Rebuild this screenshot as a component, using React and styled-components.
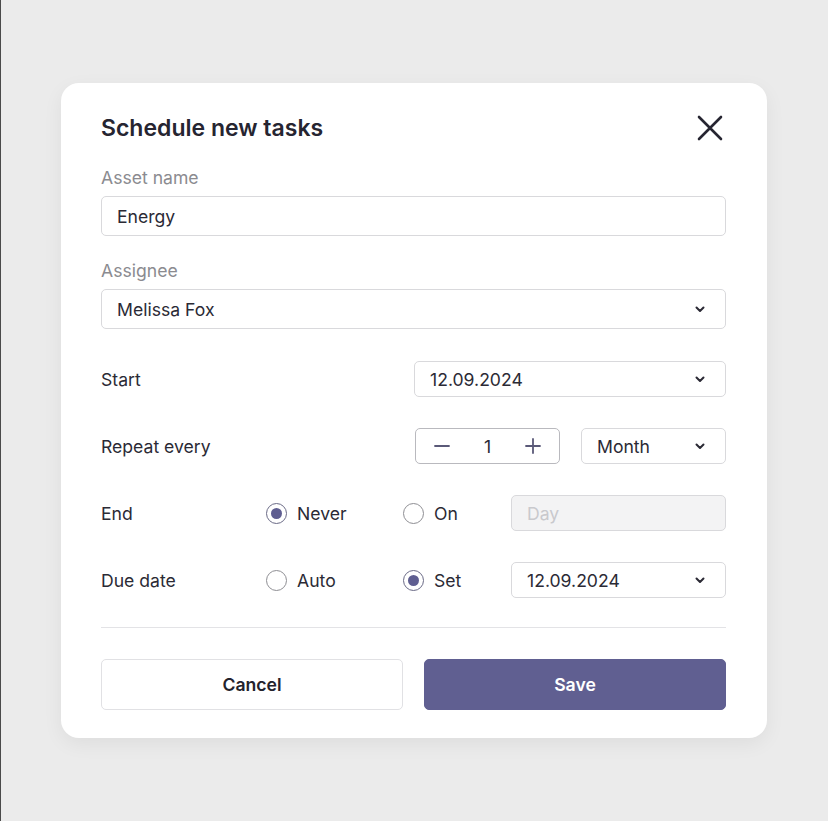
import React from "react";
import styled, { createGlobalStyle } from "styled-components";

const Global = createGlobalStyle`
  html, body { margin: 0; padding: 0; background: #ebebeb; }
  body {
    font-family: Inter, "Noto Sans", sans-serif;
    color: #2b2a35;
    min-height: 821px;
    border-left: 1px solid #4a4a4a;
    box-sizing: border-box;
  }
  * { box-sizing: border-box; }
`;

const Page = styled.div`
  padding: 83px 0 0 60px;
`;

const Card = styled.div`
  width: 706px;
  background: #fff;
  border-radius: 18px;
  box-shadow: 0 6px 20px rgba(0, 0, 0, 0.06);
  padding: 31px 41px 28px 40px;
  display: flex;
  flex-direction: column;
`;

const Header = styled.div`
  display: flex;
  align-items: center;
  justify-content: space-between;
  height: 28px;
  margin-bottom: 25px;
`;

const Title = styled.h1`
  margin: 0;
  font-size: 23px;
  font-weight: 600;
  color: #262531;
`;

const CloseBtn = styled.button`
  border: none;
  background: none;
  padding: 0;
  width: 26px;
  height: 26px;
  margin-right: 3px;
  display: flex;
  align-items: center;
  justify-content: center;
  cursor: pointer;
`;

const Field = styled.div`
  display: flex;
  flex-direction: column;
  gap: 7px;
  margin-bottom: ${(p) => p.$mb || 0}px;
`;

const FieldLabel = styled.label`
  font-size: 17.6px;
  line-height: 22px;
  color: #8b8b90;
`;

const Box = styled.div`
  height: ${(p) => p.$h || 36}px;
  width: ${(p) => (p.$w ? `${p.$w}px` : "100%")};
  border: 1px solid ${(p) => (p.$strong ? "#b9b9be" : "#d9d9dc")};
  border-radius: 5px;
  background: ${(p) => (p.$disabled ? "#f3f3f4" : "#fff")};
  display: flex;
  align-items: center;
  padding: 0 19px 0 15px;
  font-size: 17.6px;
  color: ${(p) => (p.$disabled ? "#c9c9cd" : "#2b2a35")};
  flex-shrink: 0;
  margin-left: ${(p) => p.$ml || 0}px;
`;

const BoxText = styled.span`
  flex: 1;
`;

const Row = styled.div`
  display: flex;
  align-items: center;
  height: 36px;
  margin-top: ${(p) => p.$mt || 31}px;
`;

const RowLabel = styled.div`
  font-size: 17.6px;
  width: ${(p) => p.$w || 165}px;
  flex-shrink: 0;
  color: #2b2a35;
`;

const Spacer = styled.div`
  flex: 1;
`;

const Radio = styled.label`
  display: flex;
  align-items: center;
  gap: 10px;
  width: ${(p) => p.$w}px;
  font-size: 17.6px;
  flex-shrink: 0;
`;

const Circle = styled.span`
  width: 21px;
  height: 21px;
  border-radius: 50%;
  border: 1.5px solid ${(p) => (p.$on ? "#6a6a86" : "#8e8e93")};
  display: flex;
  align-items: center;
  justify-content: center;
  &::after {
    content: "";
    width: 11px;
    height: 11px;
    border-radius: 50%;
    background: #5f5e91;
    display: ${(p) => (p.$on ? "block" : "none")};
  }
`;

const Stepper = styled(Box)`
  padding: 0 18px;
  justify-content: space-between;
`;

const Divider = styled.hr`
  border: none;
  height: 1px;
  background: #e3e3e6;
  margin: 29px 0 31px;
`;

const Buttons = styled.div`
  display: grid;
  grid-template-columns: 1fr 1fr;
  gap: 21px;
`;

const Button = styled.button`
  height: 51px;
  border-radius: 5px;
  font-family: inherit;
  font-size: 17.6px;
  font-weight: 600;
  border: 1px solid ${(p) => (p.$primary ? "#605f91" : "#e1e1e4")};
  background: ${(p) => (p.$primary ? "#605f91" : "#fff")};
  color: ${(p) => (p.$primary ? "#fff" : "#23222c")};
  cursor: pointer;
`;

const Chevron = () => (
  <svg width="12" height="12" viewBox="0 0 12 12" fill="none">
    <path d="M2.5 4.5L6 8l3.5-3.5" stroke="#2b2a35" strokeWidth="2" strokeLinecap="round" strokeLinejoin="round" />
  </svg>
);

const Minus = () => (
  <svg width="16" height="16" viewBox="0 0 16 16" fill="none">
    <path d="M1 8h14" stroke="#5a5978" strokeWidth="1.8" strokeLinecap="round" />
  </svg>
);

const Plus = () => (
  <svg width="16" height="16" viewBox="0 0 16 16" fill="none">
    <path d="M1 8h14M8 1v14" stroke="#5a5978" strokeWidth="1.8" strokeLinecap="round" />
  </svg>
);

const Select = ({ children, ...rest }) => (
  <Box {...rest}>
    <BoxText>{children}</BoxText>
    <Chevron />
  </Box>
);

export default function App() {
  return (
    <>
      <Global />
      <Page>
        <Card>
          <Header>
            <Title>Schedule new tasks</Title>
            <CloseBtn aria-label="Close">
              <svg width="26" height="26" viewBox="0 0 26 26" fill="none">
                <path d="M2 2l22 22M24 2L2 24" stroke="#262531" strokeWidth="2.6" strokeLinecap="round" />
              </svg>
            </CloseBtn>
          </Header>

          <Field $mb={24}>
            <FieldLabel>Asset name</FieldLabel>
            <Box $h={40}>
              <BoxText>Energy</BoxText>
            </Box>
          </Field>

          <Field>
            <FieldLabel>Assignee</FieldLabel>
            <Select $h={40}>Melissa Fox</Select>
          </Field>

          <Row $mt={32}>
            <RowLabel>Start</RowLabel>
            <Spacer />
            <Select $w={312}>12.09.2024</Select>
          </Row>

          <Row>
            <RowLabel>Repeat every</RowLabel>
            <Spacer />
            <Stepper $w={145} $strong>
              <Minus />
              <span>1</span>
              <Plus />
            </Stepper>
            <Select $w={145} $ml={21}>Month</Select>
          </Row>

          <Row>
            <RowLabel>End</RowLabel>
            <Radio $w={137}>
              <Circle $on />
              Never
            </Radio>
            <Radio $w={108}>
              <Circle />
              On
            </Radio>
            <Box $w={215} $disabled>
              <BoxText>Day</BoxText>
            </Box>
          </Row>

          <Row>
            <RowLabel>Due date</RowLabel>
            <Radio $w={137}>
              <Circle />
              Auto
            </Radio>
            <Radio $w={108}>
              <Circle $on />
              Set
            </Radio>
            <Select $w={215}>12.09.2024</Select>
          </Row>

          <Divider />

          <Buttons>
            <Button>Cancel</Button>
            <Button $primary>Save</Button>
          </Buttons>
        </Card>
      </Page>
    </>
  );
}
